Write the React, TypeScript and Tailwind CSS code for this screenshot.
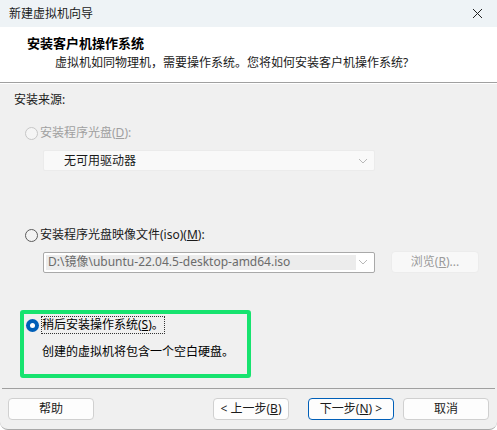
import React from "react";

const font = {
  fontFamily:
    '"Noto Sans", "Liberation Sans", "Noto Sans CJK SC", sans-serif',
};

function Radio({ state }: { state: "disabled" | "off" | "on" }) {
  if (state === "on") {
    return (
      <span className="w-[13px] h-[13px] rounded-full bg-[#005fb8] flex items-center justify-center shrink-0">
        <span className="w-[5px] h-[5px] rounded-full bg-white" />
      </span>
    );
  }
  return (
    <span
      className={
        state === "disabled"
          ? "w-[13px] h-[13px] rounded-full border border-[#c6c6c6] bg-[#f5f5f5] shrink-0"
          : "w-[13px] h-[13px] rounded-full border border-[#5c5c5c] bg-[#f3f3f3] shrink-0"
      }
    />
  );
}

function Chevron({ color }: { color: string }) {
  return (
    <svg width="10" height="6" viewBox="0 0 10 6" className="shrink-0">
      <path d="M1 1 L5 5 L9 1" fill="none" stroke={color} strokeWidth="1" />
    </svg>
  );
}

function Btn({
  children,
  primary,
  width,
}: {
  children: React.ReactNode;
  primary?: boolean;
  width: string;
}) {
  return (
    <div
      className={
        "h-[22px] rounded-[4px] bg-[#fdfdfd] flex items-center justify-center text-[12px] text-[#1b1b1b] border " +
        (primary ? "border-[#005fb8] " : "border-[#d0d0d0] ") +
        width
      }
    >
      {children}
    </div>
  );
}

export default function App() {
  return (
    <div
      className="w-[497px] h-[430px] flex flex-col bg-[#f0f0f0] text-[#1a1a1a] overflow-hidden rounded-b-[8px] border-b border-[#a8a8a8]"
      style={font}
    >
      {/* 标题栏 */}
      <div className="h-[27px] bg-[#eef3f6] flex items-center justify-between pl-[9px] pr-[14px] shrink-0">
        <span className="text-[12px] leading-none">新建虚拟机向导</span>
        <svg width="11" height="11" viewBox="0 0 11 11">
          <path d="M1 1 L10 10 M10 1 L1 10" stroke="#222" strokeWidth="1" />
        </svg>
      </div>

      {/* 头部 */}
      <div className="h-[56px] bg-white border-b border-[#a0a0a0] shrink-0 flex flex-col pt-[8px]">
        <div className="pl-[27px] text-[13px] font-bold leading-[16px] text-black">
          安装客户机操作系统
        </div>
        <div className="pl-[55px] mt-[4px] text-[12px] leading-[16px]">
          虚拟机如同物理机，需要操作系统。您将如何安装客户机操作系统?
        </div>
      </div>
      <div className="h-px bg-white shrink-0" />

      {/* 内容 */}
      <div className="flex-1 flex flex-col pl-[14px]">
        <div className="mt-[8px] text-[12px] leading-[16px]">安装来源:</div>

        <div className="mt-[17px] ml-[11px] flex items-center gap-[2px] text-[12px] leading-[16px] text-[#a0a0a0]">
          <Radio state="disabled" />
          <span>
            安装程序光盘(<span className="underline">D</span>):
          </span>
        </div>

        <div className="mt-[9px] ml-[29px] w-[332px] h-[21px] bg-[#f9f9f9] border border-[#ebebeb] rounded-[2px] flex items-center justify-between pl-[20px] pr-[6px]">
          <span className="text-[12px] text-[#1a1a1a]">无可用驱动器</span>
          <Chevron color="#b8b8b8" />
        </div>

        <div className="mt-[56px] ml-[11px] flex items-center gap-[2px] text-[12px] leading-[16px]">
          <Radio state="off" />
          <span>
            安装程序光盘映像文件(iso)(<span className="underline">M</span>):
          </span>
        </div>

        <div className="mt-[8px] ml-[29px] flex items-center gap-[16px]">
          <div className="w-[332px] h-[21px] bg-white border border-[#a9a9a9] rounded-[2px] flex items-center justify-between p-[2px] pr-[6px]">
            <div className="w-[310px] h-[15px] bg-[#ececec] flex items-center pl-[2px] text-[12px] text-[#6b6b6b] whitespace-nowrap">
              D:\镜像\ubuntu-22.04.5-desktop-amd64.iso
            </div>
            <Chevron color="#b8b8b8" />
          </div>
          <div className="w-[88px] h-[22px] bg-[#f8f8f8] border border-[#ececec] rounded-[4px] flex items-center justify-center text-[12px] text-[#9a9a9a]">
            浏览(<span className="underline">R</span>)...
          </div>
        </div>

        <div className="mt-[37px] ml-[6px] w-[231px] h-[68px] border-[4px] border-[#17e36f] rounded-[3px] flex flex-col">
          <div className="mt-[2px] ml-[2px] flex items-center gap-[2px]">
            <Radio state="on" />
            <span className="text-[12px] leading-[18px] text-black outline outline-1 outline-dotted outline-[#333] -outline-offset-1 px-[1px]">
              稍后安装操作系统(<span className="underline">S</span>)。
            </span>
          </div>
          <div className="mt-[10px] ml-[18px] text-[12px] leading-[16px] text-black">
            创建的虚拟机将包含一个空白硬盘。
          </div>
        </div>

        <div className="flex-1" />
      </div>

      {/* 底部 */}
      <div className="h-px bg-[#a0a0a0] shrink-0 mx-[2px]" />
      <div className="h-[40px] shrink-0 flex items-start pt-[9px] px-[8px]">
        <Btn width="w-[86px]">帮助</Btn>
        <div className="flex-1" />
        <Btn width="w-[76px]">
          &lt; 上一步(<span className="underline">B</span>)
        </Btn>
        <div className="w-[19px]" />
        <Btn primary width="w-[86px]">
          下一步(<span className="underline">N</span>) &gt;
        </Btn>
        <div className="w-[9px]" />
        <Btn width="w-[86px]">取消</Btn>
      </div>
    </div>
  );
}
